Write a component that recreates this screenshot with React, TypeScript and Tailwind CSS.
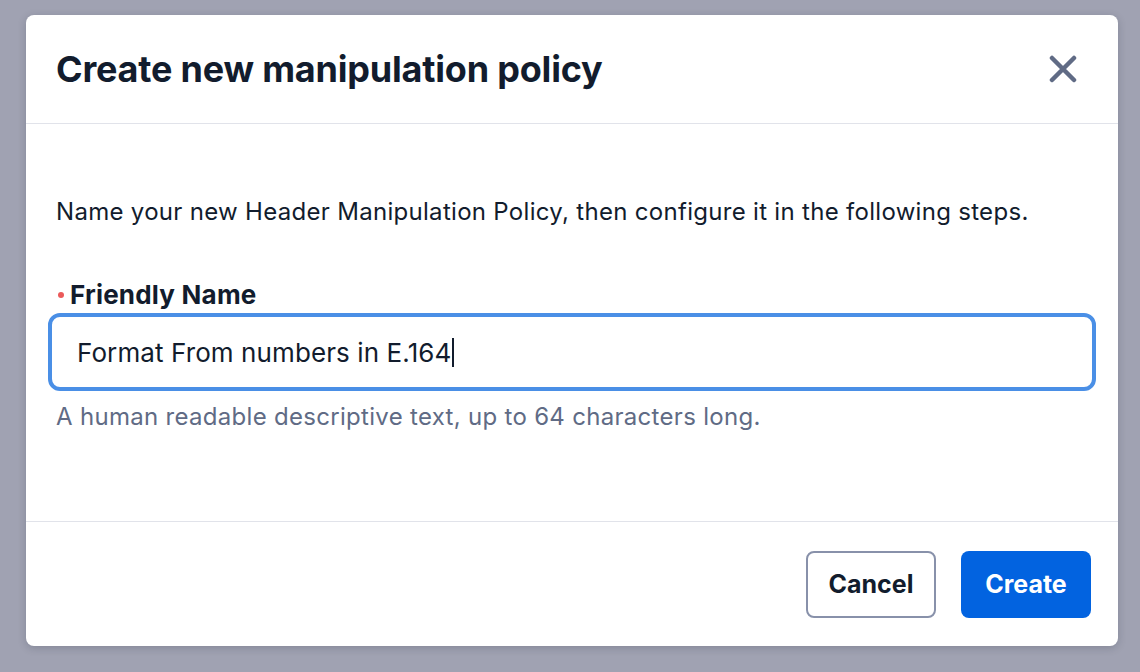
import React from 'react';

const font = { fontFamily: 'Inter, "Noto Sans", sans-serif' };

function CloseIcon() {
  return (
    <svg width="28" height="28" viewBox="0 0 28 28" fill="none">
      <path d="M3 3L25 25M25 3L3 25" stroke="#606b85" strokeWidth="4.5" strokeLinecap="round" />
    </svg>
  );
}

export default function App() {
  return (
    <div className="h-[672px] w-[1140px] overflow-hidden bg-[#a0a2b2] pl-[26px] pt-[15px]" style={font}>
      <div className="flex h-[631px] w-[1092px] flex-col rounded-[8px] bg-white shadow-[0_2px_8px_rgba(18,28,45,0.2)]">
        {/* Header */}
        <div className="flex h-[109px] items-center justify-between border-b border-[#e1e3ea] pl-[30px] pr-[41px]">
          <h2 className="text-[36px] font-bold tracking-[-0.2px] text-[#121c2d]">Create new manipulation policy</h2>
          <button className="flex h-[28px] w-[28px] items-center justify-center">
            <CloseIcon />
          </button>
        </div>

        {/* Body */}
        <div className="flex flex-1 flex-col pl-[30px] pr-[22px] pt-[72px]">
          <p className="text-[24px] leading-[32px] tracking-[0.3px] text-[#121c2d]">
            Name your new Header Manipulation Policy, then configure it in the following steps.
          </p>
          <label className="mt-[51px] flex items-center gap-[6px] pl-[2px] text-[26px] font-bold leading-[32px] tracking-[0.2px] text-[#121c2d]">
            <span className="h-[6px] w-[6px] rounded-full bg-[#eb5a5a]" />
            Friendly Name
          </label>
          <div className="-ml-[8px] mt-[2px] flex h-[78px] items-center rounded-[12px] border-[4px] border-[#4a8fe6] pl-[25px]">
            <span className="text-[26px] tracking-[0.1px] text-[#121c2d]">Format From numbers in E.164</span>
            <span className="ml-[1px] h-[29px] w-[2px] bg-[#121c2d]" />
          </div>
          <p className="mt-[10px] text-[24px] leading-[32px] tracking-[0.3px] text-[#606b85]">
            A human readable descriptive text, up to 64 characters long.
          </p>
        </div>

        {/* Footer */}
        <div className="flex h-[125px] items-start justify-end gap-[25px] border-t border-[#e1e3ea] pr-[27px] pt-[29px]">
          <button className="h-[67px] w-[130px] rounded-[8px] border-2 border-[#8891aa] bg-white text-[25px] font-bold text-[#121c2d]">
            Cancel
          </button>
          <button className="h-[67px] w-[130px] rounded-[8px] bg-[#0263e0] text-[25px] font-bold text-white">
            Create
          </button>
        </div>
      </div>
    </div>
  );
}
